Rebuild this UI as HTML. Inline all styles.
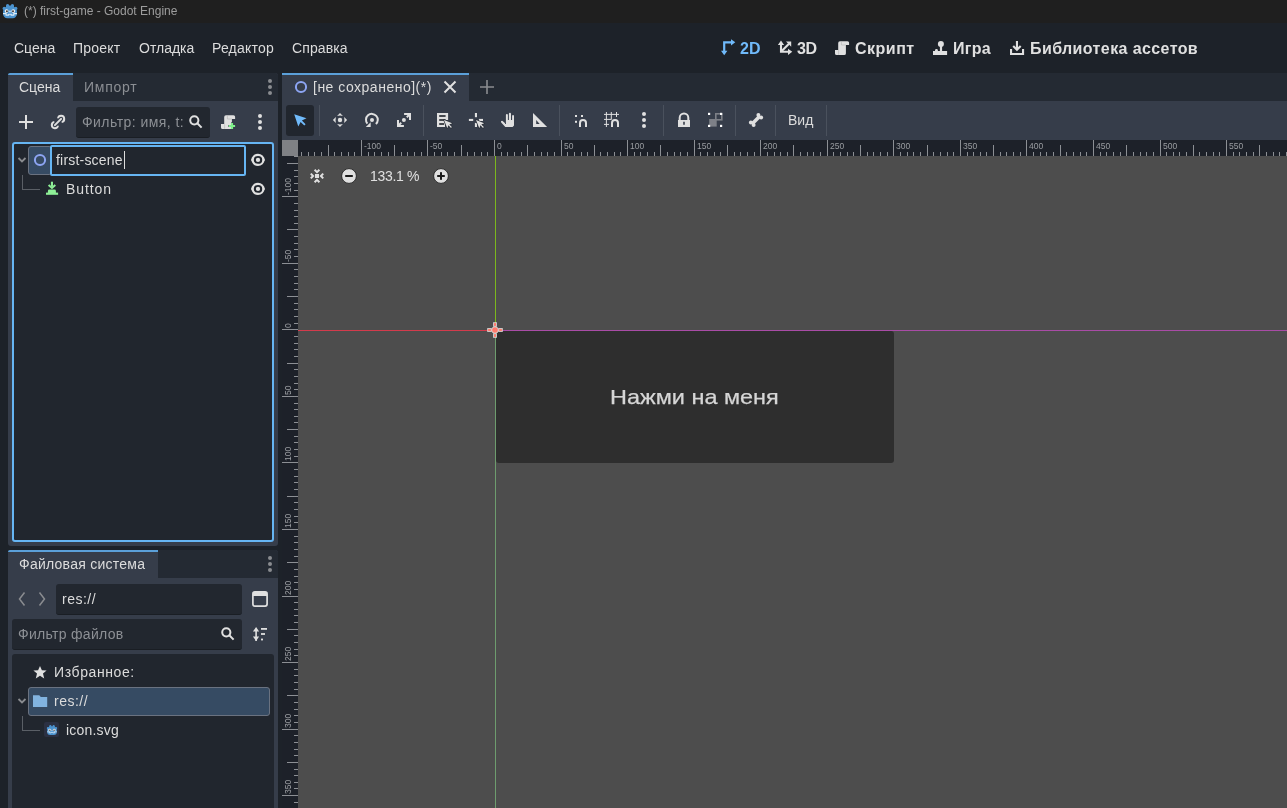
<!DOCTYPE html>
<html><head><meta charset="utf-8">
<style>
*{margin:0;padding:0;box-sizing:border-box}
html,body{width:1287px;height:808px;overflow:hidden;background:#1d2229;font-family:"Liberation Sans",sans-serif;color:#dfdfdf}
.a{position:absolute}
.t{position:absolute;white-space:nowrap;line-height:1;font-size:14px;will-change:transform}
svg{position:absolute;overflow:visible}
</style></head><body>

<div class="a" style="left:0px;top:0px;width:1287px;height:23px;background:#1f1f1f;"></div>
<svg style="left:0px;top:1px" width="20" height="20" viewBox="0 0 20 20"><g fill="#4b93cf">
<rect x="3.1" y="6" width="13.8" height="11.2" rx="4.2"/>
<circle cx="4.2" cy="7.4" r="1.6"/><circle cx="15.8" cy="7.4" r="1.6"/>
<circle cx="7.6" cy="4.6" r="1.6"/><circle cx="12.4" cy="4.6" r="1.6"/>
<rect x="6" y="4.6" width="8" height="4"/><rect x="4" y="6.5" width="12" height="4"/>
</g>
<path d="M9.3 2.6H10.7V4.3H9.3Z" fill="#1f1f1f" opacity="0"/>
<circle cx="6.6" cy="10.1" r="1.9" fill="#f2f2f2"/><circle cx="13.3" cy="10.1" r="1.9" fill="#f2f2f2"/>
<circle cx="6.9" cy="10.3" r="0.95" fill="#3a3330"/><circle cx="13" cy="10.3" r="0.95" fill="#3a3330"/>
<circle cx="9.95" cy="10.5" r="0.9" fill="#cfe3f3"/>
<path fill="none" stroke="#dcecf8" stroke-width="1.1" d="M3 12.6H6.1V14.1H8.7V13.3H11.2V14.1H13.8V12.6H17"/></svg>
<div class="t" style="left:24px;top:5px;font-size:12px;color:#9d9d9d;">(*) first-game - Godot Engine</div>
<div class="t" style="left:14px;top:41px;font-size:14px;color:#dcdcdc;letter-spacing:0px">Сцена</div>
<div class="t" style="left:73px;top:41px;font-size:14px;color:#dcdcdc;letter-spacing:0.2px">Проект</div>
<div class="t" style="left:139px;top:41px;font-size:14px;color:#dcdcdc;letter-spacing:0px">Отладка</div>
<div class="t" style="left:211.5px;top:41px;font-size:14px;color:#dcdcdc;letter-spacing:0.2px">Редактор</div>
<div class="t" style="left:292px;top:41px;font-size:14px;color:#dcdcdc;letter-spacing:0.1px">Справка</div>
<svg style="left:718px;top:38px" width="20" height="20" viewBox="0 0 20 20"><g fill="none" stroke="#70bafa" stroke-width="2.2"><path d="M6.2 14V4.3H13.5"/></g><path fill="#70bafa" d="M3 12.8H9.4L6.2 17.2Z M13 1.3V7.4L17.3 4.3Z"/></svg>
<div class="t" style="left:740px;top:41px;font-size:16px;color:#70bafa;font-weight:bold">2D</div>
<svg style="left:775px;top:38px" width="20" height="20" viewBox="0 0 20 20"><g fill="none" stroke="#e0e0e0" stroke-width="2.1"><path d="M6 6.5V13.8H13.5"/><path d="M6.5 13.3 14 5.8"/></g><path fill="#e0e0e0" d="M6 2.6 9.1 6.9H2.9Z M17.3 13.8 13 10.7V16.9Z M16.2 3.6V8.8L11 3.6Z"/></svg>
<div class="t" style="left:797px;top:41px;font-size:16px;color:#e0e0e0;font-weight:bold;letter-spacing:-0.5px">3D</div>
<svg style="left:832px;top:38px" width="20" height="20" viewBox="0 0 20 20"><path fill="#e0e0e0" d="M8 3.2H15.5A1.6 1.6 0 0 1 17.1 4.8V6.9H13.9V15.4A1.7 1.7 0 0 1 12.2 17.1H4.6A1.6 1.6 0 0 1 3 15.5V11.9H6.2V5A1.8 1.8 0 0 1 8 3.2Z"/><path fill="none" stroke="#b4b4b4" stroke-width="0.6" d="M9.4 3.6V7H13.8 M6.6 12.2V16.8"/></svg>
<div class="t" style="left:855px;top:41px;font-size:16px;color:#e0e0e0;font-weight:bold;letter-spacing:0.5px">Скрипт</div>
<svg style="left:930px;top:38px" width="20" height="20" viewBox="0 0 20 20"><circle cx="10.9" cy="5.9" r="3" fill="#e0e0e0"/><rect x="9.9" y="7" width="2.2" height="7" fill="#e0e0e0"/><path fill="#e0e0e0" d="M3 13.1H5V12.5A1.45 1.45 0 0 1 7.9 12.5V13.1H17.1V17.1H3Z"/></svg>
<div class="t" style="left:953px;top:41px;font-size:16px;color:#e0e0e0;font-weight:bold;letter-spacing:0.3px">Игра</div>
<svg style="left:1007px;top:38px" width="20" height="20" viewBox="0 0 20 20"><g fill="none" stroke="#e0e0e0" stroke-width="2.1"><path d="M9.95 3V11.5"/><path d="M6.2 8 9.95 11.8 13.7 8"/><path d="M4.05 11.1V16.05H16.05V11.1"/></g></svg>
<div class="t" style="left:1030px;top:41px;font-size:16px;color:#e0e0e0;font-weight:bold;letter-spacing:0.4px">Библиотека ассетов</div>
<div class="a" style="left:8px;top:73px;width:270px;height:473px;background:#363d4a;border-radius:3px"></div>
<div class="a" style="left:73px;top:73px;width:205px;height:28px;background:#242a33;border-top-right-radius:3px"></div>
<div class="a" style="left:8px;top:73px;width:65px;height:2px;background:#5ba0d9;border-top-left-radius:2px"></div>
<div class="t" style="left:19px;top:80px;font-size:14px;color:#dcdcdc;">Сцена</div>
<div class="t" style="left:84px;top:80px;font-size:14px;color:#8b8e93;letter-spacing:0.75px">Импорт</div>
<svg style="left:267px;top:78px" width="6" height="18" viewBox="0 0 6 18"><circle cx="3" cy="3" r="2" fill="#8a8c90"/><circle cx="3" cy="9" r="2" fill="#8a8c90"/><circle cx="3" cy="15" r="2" fill="#8a8c90"/></svg>
<svg style="left:18px;top:114px" width="16" height="16" viewBox="0 0 16 16"><path fill="none" stroke="#e0e0e0" stroke-width="2" d="M8 1V15M1 8H15"/></svg>
<svg style="left:48px;top:112px" width="20" height="20" viewBox="0 0 20 20"><g fill="none" stroke="#e0e0e0" stroke-width="2"><path d="M9.95 13.64A3.1 3.1 0 1 1 6.36 10.05"/><path d="M10.05 6.36A3.1 3.1 0 1 1 13.64 9.95"/></g><path d="M6.9 13.1 13.1 6.9" stroke="#363d4a" stroke-width="4"/><path d="M6.9 13.1 13.1 6.9" stroke="#e0e0e0" stroke-width="2" stroke-linecap="round"/></svg>
<div class="a" style="left:76px;top:107px;width:134px;height:31px;background:#22272f;border-radius:3px;border-bottom:1px solid #1a1e24"></div>
<div class="t" style="left:82px;top:115px;font-size:14px;color:#8d9095;letter-spacing:0.45px">Фильтр: имя, t:</div>
<svg style="left:189px;top:115px" width="14" height="14" viewBox="0 0 14 14"><g fill="none" stroke="#e0e0e0" stroke-width="2"><circle cx="5.3" cy="5.3" r="4.1"/><path d="M8.3 8.3 12.6 12.6"/></g></svg>
<svg style="left:218px;top:112px" width="20" height="20" viewBox="0 0 20 20"><path fill="#e0e0e0" d="M8 3.2H15.5A1.6 1.6 0 0 1 17.1 4.8V6.9H13.9V15.4A1.7 1.7 0 0 1 12.2 17.1H4.6A1.6 1.6 0 0 1 3 15.5V11.9H6.2V5A1.8 1.8 0 0 1 8 3.2Z"/><path fill="none" stroke="#b4b4b4" stroke-width="0.6" d="M9.4 3.6V7H13.8 M6.6 12.2V16.8"/><path fill="none" stroke="#363d4a" stroke-width="1.6" d="M14 10.2V17.8M10.2 14H17.8"/><path fill="none" stroke="#7ff08a" stroke-width="2.2" d="M14 10.9V17.1M10.9 14H17.1"/></svg>
<svg style="left:257px;top:113px" width="6" height="18" viewBox="0 0 6 18"><circle cx="3" cy="3" r="2" fill="#e0e0e0"/><circle cx="3" cy="9" r="2" fill="#e0e0e0"/><circle cx="3" cy="15" r="2" fill="#e0e0e0"/></svg>
<div class="a" style="left:12px;top:142px;width:262px;height:400px;background:#21262e;border:2px solid #66b5f3;border-radius:3px"></div>
<svg style="left:16px;top:155px" width="12" height="8" viewBox="0 0 12 8"><path fill="none" stroke="#8a8c90" stroke-width="1.8" d="M2.5 3 6 6.5 9.5 3"/></svg>
<div class="a" style="left:28px;top:146px;width:24px;height:29px;background:#364b63;border:1px solid #6a7280;border-radius:3px"></div>
<svg style="left:33px;top:153px" width="14" height="14" viewBox="0 0 14 14"><circle cx="7" cy="7" r="5.1" fill="none" stroke="#8da5f3" stroke-width="2"/></svg>
<div class="a" style="left:50px;top:145px;width:196px;height:31px;background:#21262e;border:2px solid #66b5f3;border-radius:2px"></div>
<div class="t" style="left:56px;top:153px;font-size:14px;color:#dcdcdc;letter-spacing:0.2px">first-scene</div>
<div class="a" style="left:124px;top:151px;width:1px;height:18px;background:#dcdcdc;"></div>
<svg style="left:248px;top:150px" width="20" height="20" viewBox="0 0 20 20"><ellipse cx="10" cy="9.9" rx="5.4" ry="5.05" fill="none" stroke="#e0e0e0" stroke-width="2.3"/><path fill="#e0e0e0" d="M2.9 9.9 5.2 7.6V12.2Z M17.1 9.9 14.8 7.6V12.2Z"/><circle cx="10" cy="9.9" r="2.15" fill="#e0e0e0"/></svg>
<div class="a" style="left:22px;top:175px;width:1px;height:15px;background:#5a5f66;"></div>
<div class="a" style="left:22px;top:189px;width:18px;height:1px;background:#5a5f66;"></div>
<svg style="left:42px;top:176px" width="20" height="20" viewBox="0 0 20 20"><g fill="#8eef97"><rect x="8.9" y="5.7" width="2.1" height="5"/><path d="M5.9 17V15A1.4 1.4 0 0 1 7.3 13.6H12.5A1.4 1.4 0 0 1 13.9 15V17Z"/><rect x="4" y="16.6" width="12.1" height="2.2"/></g><path fill="none" stroke="#8eef97" stroke-width="2" d="M6.6 9 9.95 12 13.3 9"/></svg>
<div class="t" style="left:66px;top:182px;font-size:14px;color:#dcdcdc;letter-spacing:0.9px">Button</div>
<svg style="left:248px;top:179px" width="20" height="20" viewBox="0 0 20 20"><ellipse cx="10" cy="9.9" rx="5.4" ry="5.05" fill="none" stroke="#e0e0e0" stroke-width="2.3"/><path fill="#e0e0e0" d="M2.9 9.9 5.2 7.6V12.2Z M17.1 9.9 14.8 7.6V12.2Z"/><circle cx="10" cy="9.9" r="2.15" fill="#e0e0e0"/></svg>
<div class="a" style="left:8px;top:550px;width:270px;height:258px;background:#363d4a;border-radius:3px 3px 0 0"></div>
<div class="a" style="left:158px;top:550px;width:120px;height:28px;background:#242a33;border-top-right-radius:3px"></div>
<div class="a" style="left:8px;top:550px;width:150px;height:2px;background:#5ba0d9;border-top-left-radius:2px"></div>
<div class="t" style="left:19px;top:557px;font-size:14px;color:#dcdcdc;letter-spacing:0.25px">Файловая система</div>
<svg style="left:267px;top:555px" width="6" height="18" viewBox="0 0 6 18"><circle cx="3" cy="3" r="2" fill="#8a8c90"/><circle cx="3" cy="9" r="2" fill="#8a8c90"/><circle cx="3" cy="15" r="2" fill="#8a8c90"/></svg>
<svg style="left:16px;top:590px" width="12" height="18" viewBox="0 0 12 18"><path fill="none" stroke="#8a8c90" stroke-width="1.5" d="M8.5 2.5 3.5 9 8.5 15.5"/></svg>
<svg style="left:36px;top:590px" width="12" height="18" viewBox="0 0 12 18"><path fill="none" stroke="#8a8c90" stroke-width="1.5" d="M3.5 2.5 8.5 9 3.5 15.5"/></svg>
<div class="a" style="left:56px;top:584px;width:186px;height:31px;background:#22272f;border-radius:3px;border-bottom:1px solid #1a1e24"></div>
<div class="t" style="left:62px;top:592px;font-size:14px;color:#dcdcdc;letter-spacing:0.5px">res://</div>
<svg style="left:252px;top:591px" width="16" height="16" viewBox="0 0 16 16"><rect x="0.9" y="0.9" width="14.2" height="14.2" rx="2" fill="none" stroke="#e0e0e0" stroke-width="1.7"/><rect x="1" y="1" width="14" height="4" fill="#e0e0e0"/></svg>
<div class="a" style="left:12px;top:619px;width:230px;height:31px;background:#22272f;border-radius:3px;border-bottom:1px solid #1a1e24"></div>
<div class="t" style="left:18px;top:627px;font-size:14px;color:#8d9095;letter-spacing:0.3px">Фильтр файлов</div>
<svg style="left:221px;top:627px" width="14" height="14" viewBox="0 0 14 14"><g fill="none" stroke="#e0e0e0" stroke-width="2"><circle cx="5.3" cy="5.3" r="4.1"/><path d="M8.3 8.3 12.6 12.6"/></g></svg>
<svg style="left:252px;top:627px" width="16" height="16" viewBox="0 0 16 16"><g fill="#e0e0e0"><rect x="3.3" y="2" width="1.6" height="12"/><path d="M0.9 4.6 4.1 0 7.1 4.6Z M0.9 9.4 4.1 14 7.1 9.4Z"/><rect x="9" y="1" width="6" height="1.8"/><rect x="9" y="6.1" width="4" height="1.8"/><rect x="9" y="11.6" width="2" height="1.8"/></g></svg>
<div class="a" style="left:12px;top:654px;width:262px;height:160px;background:#21262e;border-radius:3px"></div>
<svg style="left:32px;top:665px" width="16" height="16" viewBox="0 0 16 16"><path fill="#e0e0e0" d="M8 1 9.9 5.3 14.6 5.6 11 8.6 12.2 13.4 8 10.8 3.8 13.4 5 8.6 1.4 5.6 6.1 5.3Z"/></svg>
<div class="t" style="left:54px;top:665px;font-size:14px;color:#dcdcdc;letter-spacing:0.6px">Избранное:</div>
<div class="a" style="left:28px;top:687px;width:242px;height:29px;background:#364b63;border:1px solid #6a7280;border-radius:3px"></div>
<svg style="left:16px;top:697px" width="12" height="8" viewBox="0 0 12 8"><path fill="none" stroke="#8a8c90" stroke-width="1.8" d="M2.5 2 6 5.5 9.5 2"/></svg>
<svg style="left:32px;top:694px" width="16" height="14" viewBox="0 0 16 14"><path fill="#82b4e0" d="M1 1.2H7.3L8.8 3H15.2V13H1Z"/></svg>
<div class="t" style="left:54px;top:694px;font-size:14px;color:#dcdcdc;letter-spacing:0.5px">res://</div>
<div class="a" style="left:22px;top:716px;width:1px;height:15px;background:#5a5f66;"></div>
<div class="a" style="left:22px;top:730px;width:18px;height:1px;background:#5a5f66;"></div>
<div class="a" style="left:44px;top:722px;width:15px;height:15px;background:#2b3042;border-radius:2px"></div>
<svg style="left:44.5px;top:722.5px" width="14" height="14" viewBox="0 0 20 20"><g fill="#4b93cf">
<rect x="3.1" y="6" width="13.8" height="11.2" rx="4.2"/>
<circle cx="4.2" cy="7.4" r="1.6"/><circle cx="15.8" cy="7.4" r="1.6"/>
<circle cx="7.6" cy="4.6" r="1.6"/><circle cx="12.4" cy="4.6" r="1.6"/>
<rect x="6" y="4.6" width="8" height="4"/><rect x="4" y="6.5" width="12" height="4"/>
</g>
<path d="M9.3 2.6H10.7V4.3H9.3Z" fill="#1f1f1f" opacity="0"/>
<circle cx="6.6" cy="10.1" r="1.9" fill="#f2f2f2"/><circle cx="13.3" cy="10.1" r="1.9" fill="#f2f2f2"/>
<circle cx="6.9" cy="10.3" r="0.95" fill="#3a3330"/><circle cx="13" cy="10.3" r="0.95" fill="#3a3330"/>
<circle cx="9.95" cy="10.5" r="0.9" fill="#cfe3f3"/>
<path fill="none" stroke="#dcecf8" stroke-width="1.1" d="M3 12.6H6.1V14.1H8.7V13.3H11.2V14.1H13.8V12.6H17"/></svg>
<div class="t" style="left:66px;top:723px;font-size:14px;color:#dcdcdc;letter-spacing:0.2px">icon.svg</div>
<div class="a" style="left:282px;top:73px;width:1005px;height:28px;background:#242a33;"></div>
<div class="a" style="left:282px;top:73px;width:187px;height:28px;background:#363d4a;"></div>
<div class="a" style="left:282px;top:73px;width:187px;height:2px;background:#5ba0d9;"></div>
<svg style="left:294px;top:80px" width="14" height="14" viewBox="0 0 14 14"><circle cx="7" cy="7" r="5.1" fill="none" stroke="#8da5f3" stroke-width="2"/></svg>
<div class="t" style="left:313px;top:80px;font-size:14px;color:#dcdcdc;letter-spacing:0.5px">[не сохранено](*)</div>
<svg style="left:443px;top:80px" width="14" height="14" viewBox="0 0 14 14"><path fill="none" stroke="#e0e0e0" stroke-width="2" d="M1.5 1.5 12.5 12.5M12.5 1.5 1.5 12.5"/></svg>
<svg style="left:480px;top:80px" width="14" height="14" viewBox="0 0 14 14"><path fill="none" stroke="#8a8c90" stroke-width="1.6" d="M7 0V14M0 7H14"/></svg>
<div class="a" style="left:282px;top:101px;width:1005px;height:39px;background:#363d4a;"></div>
<div class="a" style="left:286px;top:105px;width:28px;height:31px;background:#21262e;border-radius:3px"></div>
<svg style="left:293px;top:113px" width="14" height="14" viewBox="0 0 14 14"><path fill="#70bafa" d="M1.2 1.2 13.5 5.3 8.9 7.6 12.6 11.3 11.3 12.6 7.6 8.9 5.3 13.5Z"/></svg>
<div class="a" style="left:319px;top:105px;width:1px;height:31px;background:#4a515d;"></div>
<div class="a" style="left:423px;top:105px;width:1px;height:31px;background:#4a515d;"></div>
<div class="a" style="left:559px;top:105px;width:1px;height:31px;background:#4a515d;"></div>
<div class="a" style="left:663px;top:105px;width:1px;height:31px;background:#4a515d;"></div>
<div class="a" style="left:735px;top:105px;width:1px;height:31px;background:#4a515d;"></div>
<div class="a" style="left:775px;top:105px;width:1px;height:31px;background:#4a515d;"></div>
<div class="a" style="left:826px;top:105px;width:1px;height:31px;background:#4a515d;"></div>
<svg style="left:332px;top:112px" width="16" height="16" viewBox="0 0 16 16"><g fill="#e0e0e0"><circle cx="8" cy="8" r="2.2"/><path d="M8 0.9 10.9 3.9Q8 3.2 5.1 3.9Z M8 15.1 10.9 12.1Q8 12.8 5.1 12.1Z M0.9 8 3.9 5.1Q3.2 8 3.9 10.9Z M15.1 8 12.1 5.1Q12.8 8 12.1 10.9Z"/></g></svg>
<svg style="left:364px;top:112px" width="16" height="16" viewBox="0 0 16 16"><circle cx="8" cy="8" r="2" fill="#e0e0e0"/><path fill="none" stroke="#e0e0e0" stroke-width="2" d="M11.9 12.1A5.9 5.9 0 1 0 3.4 11.6"/><path fill="#e0e0e0" d="M1.8 14.9H6.7V10.3Z"/></svg>
<svg style="left:396px;top:112px" width="16" height="16" viewBox="0 0 16 16"><circle cx="7.9" cy="8" r="2" fill="#e0e0e0"/><g fill="none" stroke="#e0e0e0" stroke-width="2"><path d="M8.1 2H14V7.9M13.5 2.5 10.8 5.2"/><path d="M2 8.1V14H7.9M2.5 13.5 5.2 10.8"/></g></svg>
<svg style="left:436px;top:112px" width="16" height="16" viewBox="0 0 16 16"><path fill="#e0e0e0" d="M1 0.9H12.1V8H9V15.1H1Z"/><g fill="#1e222a"><rect x="3.2" y="3.2" width="6.4" height="1.6"/><rect x="3.2" y="7.2" width="6.4" height="1.6"/><rect x="3.2" y="11.2" width="5" height="1.6"/></g><path fill="#e0e0e0" stroke="#2a2f38" stroke-width="1.4" paint-order="stroke" stroke-linejoin="round" d="M8 8 16.2 11.3 13.3 12.4 15.9 15 15 15.9 12.4 13.3 11.3 16.2Z"/></svg>
<svg style="left:468px;top:112px" width="16" height="16" viewBox="0 0 16 16"><g fill="#e0e0e0"><rect x="6.9" y="1" width="2.1" height="4.2"/><rect x="0.9" y="6.9" width="4.3" height="2.1"/><rect x="10.9" y="6.9" width="4.1" height="2.1"/><rect x="6.9" y="10.9" width="2.1" height="4.1"/></g><path fill="#e0e0e0" stroke="#2a2f38" stroke-width="1.4" paint-order="stroke" stroke-linejoin="round" d="M8 8 16.2 11.3 13.3 12.4 15.9 15 15 15.9 12.4 13.3 11.3 16.2Z"/></svg>
<svg style="left:500px;top:112px" width="16" height="16" viewBox="0 0 16 16"><path fill="#e0e0e0" d="M5.9 2.9A1 1 0 0 1 7.9 2.9V8H8.9V1.9A1 1 0 0 1 11 1.9V8H12.1V3.9A0.95 0.95 0 0 1 14 3.9V13.6L12.6 15.1H5.3L1.2 10.5A1 1 0 0 1 2.9 9.3L5.9 12Z"/></svg>
<svg style="left:532px;top:112px" width="16" height="16" viewBox="0 0 16 16"><path fill="#e0e0e0" fill-rule="evenodd" d="M1 0.9V15.1H15.1Z M4.2 8.1V11.9H7.7Z"/></svg>
<svg style="left:573px;top:112px" width="16" height="16" viewBox="0 0 16 16"><g fill="#e0e0e0"><rect x="2" y="3" width="2" height="2"/><rect x="8" y="3" width="2" height="2"/><rect x="2" y="8.8" width="2" height="2"/></g><path fill="none" stroke="#e0e0e0" stroke-width="2" d="M7 15V11A3 3 0 0 1 13 11V15"/></svg>
<svg style="left:603px;top:112px" width="16" height="16" viewBox="0 0 16 16"><g fill="none" stroke="#e0e0e0" stroke-width="1"><path d="M3.4 0V15M8.3 0V7M13.5 0V5M1 2.4H16M1 7.4H9M1 12.4H6"/></g><path fill="#363d4a" d="M7.5 16V10.5A4 4 0 0 1 16 10.5V16Z"/><path fill="none" stroke="#e0e0e0" stroke-width="2" d="M9 15V11A3 3 0 0 1 15 11V15"/></svg>
<svg style="left:636px;top:112px" width="16" height="16" viewBox="0 0 16 16"><g fill="#e0e0e0"><circle cx="8" cy="2" r="2"/><circle cx="8" cy="8" r="2"/><circle cx="8" cy="14" r="2"/></g></svg>
<svg style="left:676px;top:112px" width="16" height="16" viewBox="0 0 16 16"><path fill="none" stroke="#e0e0e0" stroke-width="2" d="M3.7 8.5V5.8A4.3 4.3 0 0 1 12.3 5.8V8.5"/><path fill="#e0e0e0" fill-rule="evenodd" d="M2 8H14V15H2Z M7.2 9.8V12.8H8.8V9.8Z"/></svg>
<svg style="left:708px;top:112px" width="16" height="16" viewBox="0 0 16 16"><rect x="1.2" y="7" width="7.5" height="7.6" fill="#7d8087"/><rect x="7.8" y="1.8" width="6" height="6" fill="none" stroke="#7d8087" stroke-width="1.6"/><g fill="#fff"><rect x="0" y="0.8" width="2.2" height="2.2"/><rect x="12" y="0.8" width="2.2" height="2.2"/><rect x="0" y="12.8" width="2.2" height="2.2"/><rect x="12" y="12.8" width="2.2" height="2.2"/></g></svg>
<svg style="left:748px;top:112px" width="16" height="16" viewBox="0 0 16 16"><g fill="#e0e0e0"><path d="M4 12 12 4" stroke="#e0e0e0" stroke-width="3.6"/><circle cx="2.9" cy="10.4" r="2"/><circle cx="5.6" cy="13.1" r="2"/><circle cx="10.4" cy="2.9" r="2"/><circle cx="13.1" cy="5.6" r="2"/><path d="M2.9 10.4 5.6 13.1 10.4 2.9 13.1 5.6Z"/></g></svg>
<div class="t" style="left:788px;top:113px;font-size:14px;color:#dcdcdc;">Вид</div>
<div class="a" style="left:282px;top:140px;width:1005px;height:16px;background:#1d2129;"></div>
<div class="a" style="left:282px;top:140px;width:16px;height:668px;background:#1d2129;"></div>
<div class="a" style="left:282px;top:140px;width:16px;height:16px;background:#7f8185;"></div>
<svg style="left:0;top:0" width="1287" height="808"><g fill="#8c8f94"><rect x="301" y="152" width="1" height="4"/><rect x="308" y="152" width="1" height="4"/><rect x="314" y="152" width="1" height="4"/><rect x="321" y="152" width="1" height="4"/><rect x="328" y="145" width="1" height="11"/><rect x="334" y="152" width="1" height="4"/><rect x="341" y="152" width="1" height="4"/><rect x="348" y="152" width="1" height="4"/><rect x="354" y="152" width="1" height="4"/><rect x="361" y="140" width="1" height="16"/><rect x="368" y="152" width="1" height="4"/><rect x="374" y="152" width="1" height="4"/><rect x="381" y="152" width="1" height="4"/><rect x="388" y="152" width="1" height="4"/><rect x="394" y="145" width="1" height="11"/><rect x="401" y="152" width="1" height="4"/><rect x="407" y="152" width="1" height="4"/><rect x="414" y="152" width="1" height="4"/><rect x="421" y="152" width="1" height="4"/><rect x="427" y="140" width="1" height="16"/><rect x="434" y="152" width="1" height="4"/><rect x="441" y="152" width="1" height="4"/><rect x="447" y="152" width="1" height="4"/><rect x="454" y="152" width="1" height="4"/><rect x="461" y="145" width="1" height="11"/><rect x="467" y="152" width="1" height="4"/><rect x="474" y="152" width="1" height="4"/><rect x="481" y="152" width="1" height="4"/><rect x="487" y="152" width="1" height="4"/><rect x="494" y="140" width="1" height="16"/><rect x="501" y="152" width="1" height="4"/><rect x="507" y="152" width="1" height="4"/><rect x="514" y="152" width="1" height="4"/><rect x="521" y="152" width="1" height="4"/><rect x="527" y="145" width="1" height="11"/><rect x="534" y="152" width="1" height="4"/><rect x="541" y="152" width="1" height="4"/><rect x="547" y="152" width="1" height="4"/><rect x="554" y="152" width="1" height="4"/><rect x="561" y="140" width="1" height="16"/><rect x="567" y="152" width="1" height="4"/><rect x="574" y="152" width="1" height="4"/><rect x="581" y="152" width="1" height="4"/><rect x="587" y="152" width="1" height="4"/><rect x="594" y="145" width="1" height="11"/><rect x="600" y="152" width="1" height="4"/><rect x="607" y="152" width="1" height="4"/><rect x="614" y="152" width="1" height="4"/><rect x="620" y="152" width="1" height="4"/><rect x="627" y="140" width="1" height="16"/><rect x="634" y="152" width="1" height="4"/><rect x="640" y="152" width="1" height="4"/><rect x="647" y="152" width="1" height="4"/><rect x="654" y="152" width="1" height="4"/><rect x="660" y="145" width="1" height="11"/><rect x="667" y="152" width="1" height="4"/><rect x="674" y="152" width="1" height="4"/><rect x="680" y="152" width="1" height="4"/><rect x="687" y="152" width="1" height="4"/><rect x="694" y="140" width="1" height="16"/><rect x="700" y="152" width="1" height="4"/><rect x="707" y="152" width="1" height="4"/><rect x="714" y="152" width="1" height="4"/><rect x="720" y="152" width="1" height="4"/><rect x="727" y="145" width="1" height="11"/><rect x="734" y="152" width="1" height="4"/><rect x="740" y="152" width="1" height="4"/><rect x="747" y="152" width="1" height="4"/><rect x="754" y="152" width="1" height="4"/><rect x="760" y="140" width="1" height="16"/><rect x="767" y="152" width="1" height="4"/><rect x="774" y="152" width="1" height="4"/><rect x="780" y="152" width="1" height="4"/><rect x="787" y="152" width="1" height="4"/><rect x="793" y="145" width="1" height="11"/><rect x="800" y="152" width="1" height="4"/><rect x="807" y="152" width="1" height="4"/><rect x="813" y="152" width="1" height="4"/><rect x="820" y="152" width="1" height="4"/><rect x="827" y="140" width="1" height="16"/><rect x="833" y="152" width="1" height="4"/><rect x="840" y="152" width="1" height="4"/><rect x="847" y="152" width="1" height="4"/><rect x="853" y="152" width="1" height="4"/><rect x="860" y="145" width="1" height="11"/><rect x="867" y="152" width="1" height="4"/><rect x="873" y="152" width="1" height="4"/><rect x="880" y="152" width="1" height="4"/><rect x="887" y="152" width="1" height="4"/><rect x="893" y="140" width="1" height="16"/><rect x="900" y="152" width="1" height="4"/><rect x="907" y="152" width="1" height="4"/><rect x="913" y="152" width="1" height="4"/><rect x="920" y="152" width="1" height="4"/><rect x="927" y="145" width="1" height="11"/><rect x="933" y="152" width="1" height="4"/><rect x="940" y="152" width="1" height="4"/><rect x="947" y="152" width="1" height="4"/><rect x="953" y="152" width="1" height="4"/><rect x="960" y="140" width="1" height="16"/><rect x="967" y="152" width="1" height="4"/><rect x="973" y="152" width="1" height="4"/><rect x="980" y="152" width="1" height="4"/><rect x="986" y="152" width="1" height="4"/><rect x="993" y="145" width="1" height="11"/><rect x="1000" y="152" width="1" height="4"/><rect x="1006" y="152" width="1" height="4"/><rect x="1013" y="152" width="1" height="4"/><rect x="1020" y="152" width="1" height="4"/><rect x="1026" y="140" width="1" height="16"/><rect x="1033" y="152" width="1" height="4"/><rect x="1040" y="152" width="1" height="4"/><rect x="1046" y="152" width="1" height="4"/><rect x="1053" y="152" width="1" height="4"/><rect x="1060" y="145" width="1" height="11"/><rect x="1066" y="152" width="1" height="4"/><rect x="1073" y="152" width="1" height="4"/><rect x="1080" y="152" width="1" height="4"/><rect x="1086" y="152" width="1" height="4"/><rect x="1093" y="140" width="1" height="16"/><rect x="1100" y="152" width="1" height="4"/><rect x="1106" y="152" width="1" height="4"/><rect x="1113" y="152" width="1" height="4"/><rect x="1120" y="152" width="1" height="4"/><rect x="1126" y="145" width="1" height="11"/><rect x="1133" y="152" width="1" height="4"/><rect x="1140" y="152" width="1" height="4"/><rect x="1146" y="152" width="1" height="4"/><rect x="1153" y="152" width="1" height="4"/><rect x="1160" y="140" width="1" height="16"/><rect x="1166" y="152" width="1" height="4"/><rect x="1173" y="152" width="1" height="4"/><rect x="1179" y="152" width="1" height="4"/><rect x="1186" y="152" width="1" height="4"/><rect x="1193" y="145" width="1" height="11"/><rect x="1199" y="152" width="1" height="4"/><rect x="1206" y="152" width="1" height="4"/><rect x="1213" y="152" width="1" height="4"/><rect x="1219" y="152" width="1" height="4"/><rect x="1226" y="140" width="1" height="16"/><rect x="1233" y="152" width="1" height="4"/><rect x="1239" y="152" width="1" height="4"/><rect x="1246" y="152" width="1" height="4"/><rect x="1253" y="152" width="1" height="4"/><rect x="1259" y="145" width="1" height="11"/><rect x="1266" y="152" width="1" height="4"/><rect x="1273" y="152" width="1" height="4"/><rect x="1279" y="152" width="1" height="4"/><rect x="1286" y="152" width="1" height="4"/></g></svg>
<div class="t" style="left:364px;top:141.5px;font-size:8.5px;color:#9a9da1;">-100</div>
<div class="t" style="left:430px;top:141.5px;font-size:8.5px;color:#9a9da1;">-50</div>
<div class="t" style="left:497px;top:141.5px;font-size:8.5px;color:#9a9da1;">0</div>
<div class="t" style="left:564px;top:141.5px;font-size:8.5px;color:#9a9da1;">50</div>
<div class="t" style="left:630px;top:141.5px;font-size:8.5px;color:#9a9da1;">100</div>
<div class="t" style="left:697px;top:141.5px;font-size:8.5px;color:#9a9da1;">150</div>
<div class="t" style="left:763px;top:141.5px;font-size:8.5px;color:#9a9da1;">200</div>
<div class="t" style="left:830px;top:141.5px;font-size:8.5px;color:#9a9da1;">250</div>
<div class="t" style="left:896px;top:141.5px;font-size:8.5px;color:#9a9da1;">300</div>
<div class="t" style="left:963px;top:141.5px;font-size:8.5px;color:#9a9da1;">350</div>
<div class="t" style="left:1029px;top:141.5px;font-size:8.5px;color:#9a9da1;">400</div>
<div class="t" style="left:1096px;top:141.5px;font-size:8.5px;color:#9a9da1;">450</div>
<div class="t" style="left:1163px;top:141.5px;font-size:8.5px;color:#9a9da1;">500</div>
<div class="t" style="left:1229px;top:141.5px;font-size:8.5px;color:#9a9da1;">550</div>
<svg style="left:0;top:0" width="1287" height="808"><g fill="#8c8f94"><rect x="294" y="156" width="4" height="1"/><rect x="287" y="163" width="11" height="1"/><rect x="294" y="170" width="4" height="1"/><rect x="294" y="176" width="4" height="1"/><rect x="294" y="183" width="4" height="1"/><rect x="294" y="190" width="4" height="1"/><rect x="282" y="196" width="16" height="1"/><rect x="294" y="203" width="4" height="1"/><rect x="294" y="210" width="4" height="1"/><rect x="294" y="216" width="4" height="1"/><rect x="294" y="223" width="4" height="1"/><rect x="287" y="229" width="11" height="1"/><rect x="294" y="236" width="4" height="1"/><rect x="294" y="243" width="4" height="1"/><rect x="294" y="249" width="4" height="1"/><rect x="294" y="256" width="4" height="1"/><rect x="282" y="263" width="16" height="1"/><rect x="294" y="269" width="4" height="1"/><rect x="294" y="276" width="4" height="1"/><rect x="294" y="283" width="4" height="1"/><rect x="294" y="289" width="4" height="1"/><rect x="287" y="296" width="11" height="1"/><rect x="294" y="303" width="4" height="1"/><rect x="294" y="309" width="4" height="1"/><rect x="294" y="316" width="4" height="1"/><rect x="294" y="323" width="4" height="1"/><rect x="282" y="329" width="16" height="1"/><rect x="294" y="336" width="4" height="1"/><rect x="294" y="343" width="4" height="1"/><rect x="294" y="349" width="4" height="1"/><rect x="294" y="356" width="4" height="1"/><rect x="287" y="363" width="11" height="1"/><rect x="294" y="369" width="4" height="1"/><rect x="294" y="376" width="4" height="1"/><rect x="294" y="383" width="4" height="1"/><rect x="294" y="389" width="4" height="1"/><rect x="282" y="396" width="16" height="1"/><rect x="294" y="403" width="4" height="1"/><rect x="294" y="409" width="4" height="1"/><rect x="294" y="416" width="4" height="1"/><rect x="294" y="422" width="4" height="1"/><rect x="287" y="429" width="11" height="1"/><rect x="294" y="436" width="4" height="1"/><rect x="294" y="442" width="4" height="1"/><rect x="294" y="449" width="4" height="1"/><rect x="294" y="456" width="4" height="1"/><rect x="282" y="462" width="16" height="1"/><rect x="294" y="469" width="4" height="1"/><rect x="294" y="476" width="4" height="1"/><rect x="294" y="482" width="4" height="1"/><rect x="294" y="489" width="4" height="1"/><rect x="287" y="496" width="11" height="1"/><rect x="294" y="502" width="4" height="1"/><rect x="294" y="509" width="4" height="1"/><rect x="294" y="516" width="4" height="1"/><rect x="294" y="522" width="4" height="1"/><rect x="282" y="529" width="16" height="1"/><rect x="294" y="536" width="4" height="1"/><rect x="294" y="542" width="4" height="1"/><rect x="294" y="549" width="4" height="1"/><rect x="294" y="556" width="4" height="1"/><rect x="287" y="562" width="11" height="1"/><rect x="294" y="569" width="4" height="1"/><rect x="294" y="576" width="4" height="1"/><rect x="294" y="582" width="4" height="1"/><rect x="294" y="589" width="4" height="1"/><rect x="282" y="596" width="16" height="1"/><rect x="294" y="602" width="4" height="1"/><rect x="294" y="609" width="4" height="1"/><rect x="294" y="615" width="4" height="1"/><rect x="294" y="622" width="4" height="1"/><rect x="287" y="629" width="11" height="1"/><rect x="294" y="635" width="4" height="1"/><rect x="294" y="642" width="4" height="1"/><rect x="294" y="649" width="4" height="1"/><rect x="294" y="655" width="4" height="1"/><rect x="282" y="662" width="16" height="1"/><rect x="294" y="669" width="4" height="1"/><rect x="294" y="675" width="4" height="1"/><rect x="294" y="682" width="4" height="1"/><rect x="294" y="689" width="4" height="1"/><rect x="287" y="695" width="11" height="1"/><rect x="294" y="702" width="4" height="1"/><rect x="294" y="709" width="4" height="1"/><rect x="294" y="715" width="4" height="1"/><rect x="294" y="722" width="4" height="1"/><rect x="282" y="729" width="16" height="1"/><rect x="294" y="735" width="4" height="1"/><rect x="294" y="742" width="4" height="1"/><rect x="294" y="749" width="4" height="1"/><rect x="294" y="755" width="4" height="1"/><rect x="287" y="762" width="11" height="1"/><rect x="294" y="769" width="4" height="1"/><rect x="294" y="775" width="4" height="1"/><rect x="294" y="782" width="4" height="1"/><rect x="294" y="788" width="4" height="1"/><rect x="282" y="795" width="16" height="1"/><rect x="294" y="802" width="4" height="1"/></g></svg>
<div class="t" style="left:284px;top:195px;font-size:8.5px;color:#9a9da1;transform:rotate(-90deg);transform-origin:0 0">-100</div>
<div class="t" style="left:284px;top:262px;font-size:8.5px;color:#9a9da1;transform:rotate(-90deg);transform-origin:0 0">-50</div>
<div class="t" style="left:284px;top:328px;font-size:8.5px;color:#9a9da1;transform:rotate(-90deg);transform-origin:0 0">0</div>
<div class="t" style="left:284px;top:395px;font-size:8.5px;color:#9a9da1;transform:rotate(-90deg);transform-origin:0 0">50</div>
<div class="t" style="left:284px;top:461px;font-size:8.5px;color:#9a9da1;transform:rotate(-90deg);transform-origin:0 0">100</div>
<div class="t" style="left:284px;top:528px;font-size:8.5px;color:#9a9da1;transform:rotate(-90deg);transform-origin:0 0">150</div>
<div class="t" style="left:284px;top:595px;font-size:8.5px;color:#9a9da1;transform:rotate(-90deg);transform-origin:0 0">200</div>
<div class="t" style="left:284px;top:661px;font-size:8.5px;color:#9a9da1;transform:rotate(-90deg);transform-origin:0 0">250</div>
<div class="t" style="left:284px;top:728px;font-size:8.5px;color:#9a9da1;transform:rotate(-90deg);transform-origin:0 0">300</div>
<div class="t" style="left:284px;top:794px;font-size:8.5px;color:#9a9da1;transform:rotate(-90deg);transform-origin:0 0">350</div>
<div class="a" style="left:298px;top:156px;width:989px;height:652px;background:#4d4d4d;"></div>
<div class="a" style="left:496px;top:331px;width:398px;height:132px;background:#2e2e2e;border-radius:3px"></div>
<div class="t" style="left:610px;top:386px;font-size:21px;color:#d6d6d6;transform:scaleX(1.117);transform-origin:0 0;-webkit-text-stroke:0.25px #d6d6d6">Нажми на меня</div>
<div class="a" style="left:298px;top:330px;width:197px;height:1px;background:#d33b4c;"></div>
<div class="a" style="left:495px;top:330px;width:792px;height:1px;background:#a94ca6;"></div>
<div class="a" style="left:495px;top:156px;width:1px;height:174px;background:#7cb71d;"></div>
<div class="a" style="left:495px;top:331px;width:1px;height:477px;background:#6e9c6e;"></div>
<svg style="left:487px;top:322px" width="16" height="16" viewBox="0 0 16 16"><g fill="#d9d4d2"><rect x="6.1" y="0.2" width="3.8" height="4.6"/><rect x="6.1" y="11.2" width="3.8" height="4.6"/><rect x="0.2" y="6.1" width="4.6" height="3.8"/><rect x="11.2" y="6.1" width="4.6" height="3.8"/><circle cx="8" cy="8" r="3.6"/></g><g fill="#ff7a6c"><rect x="7" y="1.1" width="2" height="2.8"/><rect x="7" y="12.1" width="2" height="2.8"/><rect x="1.1" y="7" width="2.8" height="2"/><rect x="12.1" y="7" width="2.8" height="2"/><circle cx="8" cy="8" r="2.8"/></g></svg>
<svg style="left:309px;top:168px" width="16" height="16" viewBox="0 0 16 16"><rect x="6" y="6" width="4" height="4" fill="#e0e0e0"/><g fill="none" stroke="#e0e0e0" stroke-width="2"><path d="M5.6 1.8 8 4.1 10.4 1.8M5.6 14.2 8 11.9 10.4 14.2M1.8 5.6 4.1 8 1.8 10.4M14.2 5.6 11.9 8 14.2 10.4"/></g></svg>
<svg style="left:341px;top:168px" width="16" height="16" viewBox="0 0 16 16"><circle cx="8" cy="8" r="7.4" fill="#e0e0e0" stroke="#2b2b2b" stroke-width="1"/><rect x="4.2" y="7" width="7.6" height="2" fill="#1a1a1a"/></svg>
<div class="t" style="left:370px;top:169px;font-size:14px;color:#e0e0e0;letter-spacing:-0.3px">133.1 %</div>
<svg style="left:433px;top:168px" width="16" height="16" viewBox="0 0 16 16"><circle cx="8" cy="8" r="7.4" fill="#e0e0e0" stroke="#2b2b2b" stroke-width="1"/><rect x="4.2" y="7" width="7.6" height="2" fill="#1a1a1a"/><rect x="7" y="4.2" width="2" height="7.6" fill="#1a1a1a"/></svg>
</body></html>
